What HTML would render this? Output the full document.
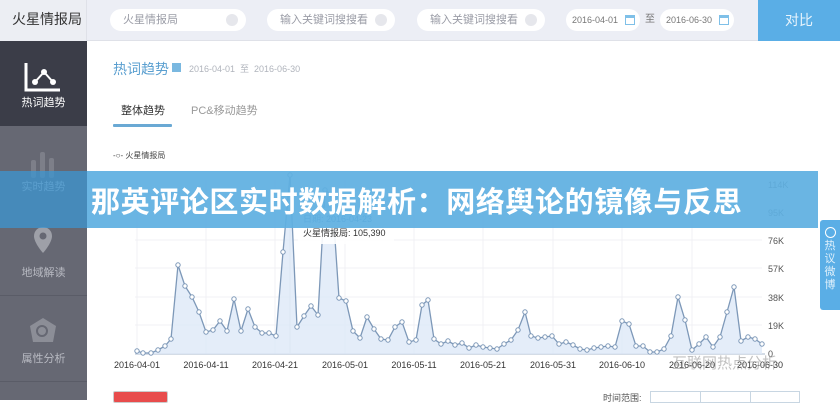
<!DOCTYPE html>
<html><head><meta charset="utf-8"><style>
*{margin:0;padding:0;box-sizing:border-box}
body{width:840px;height:400px;overflow:hidden;background:#fff;font-family:"Liberation Sans","Noto Sans CJK SC",sans-serif;position:relative}
.abs{position:absolute}
.topbar{left:0;top:0;width:840px;height:41px;background:#eceef5;border-bottom:1px solid #dfe1e8}
.inp{top:9px;height:22px;border-radius:11px;background:#fff;font-size:11px;color:#9a9ca6;line-height:22px;padding-left:13px}
.inp i{position:absolute;right:8px;top:5px;width:12px;height:12px;border-radius:6px;background:#e6e7ec}
.side{left:0;top:41px;width:87px;height:359px;background:#666873}
.sitem{width:87px;text-align:center;color:#b8bac2;font-size:11px}
</style></head><body>
<div class="abs topbar"></div>
<div class="abs" style="left:0;top:0;width:87px;height:41px;background:#eceef3;border-right:1px solid #dfe1e8;font-size:14px;color:#333;line-height:38px;padding-left:12px">火星情报局</div>
<div class="abs inp" style="left:110px;width:136px">火星情报局<i></i></div>
<div class="abs inp" style="left:267px;width:128px">输入关键词搜搜看<i></i></div>
<div class="abs inp" style="left:417px;width:128px">输入关键词搜搜看<i></i></div>
<div class="abs inp" style="left:566px;width:74px;font-size:9px;color:#777;padding-left:6px">2016-04-01<span style="position:absolute;right:5px;top:6px;width:10px;height:10px;border:1px solid #7fc0e8;border-top-width:3px"></span></div>
<div class="abs" style="left:645px;top:9px;font-size:10px;color:#777;line-height:22px">至</div>
<div class="abs inp" style="left:660px;width:74px;font-size:9px;color:#777;padding-left:6px">2016-06-30<span style="position:absolute;right:5px;top:6px;width:10px;height:10px;border:1px solid #7fc0e8;border-top-width:3px"></span></div>
<div class="abs" style="left:758px;top:0;width:82px;height:41px;background:#5aaee6;color:#e8f4fc;font-size:14px;text-align:center;line-height:40px">对比</div>

<div class="abs side"></div>
<div class="abs" style="left:0;top:41px;width:87px;height:85px;background:#3b3d48"></div>
<svg class="abs" style="left:24px;top:62px" width="40" height="30"><path d="M2 1 V28 H36" stroke="#fff" stroke-width="3" fill="none"/><path d="M11 20 L20 10 L29 20" stroke="#fff" stroke-width="2" fill="none"/><circle cx="11" cy="20" r="3" fill="#fff"/><circle cx="20" cy="10" r="3" fill="#fff"/><circle cx="29" cy="20" r="3" fill="#fff"/></svg>
<div class="abs sitem" style="top:94px;color:#fff;font-size:11px">热词趋势</div>
<div class="abs sitem" style="top:178px">实时趋势</div>
<div class="abs sitem" style="top:264px">地域解读</div>
<div class="abs" style="left:0;top:295px;width:87px;height:1px;background:#5a5c67"></div>
<div class="abs sitem" style="top:350px">属性分析</div>
<div class="abs" style="left:0;top:381px;width:87px;height:1px;background:#5a5c67"></div>
<svg class="abs" style="left:30px;top:225px" width="26" height="34"><path d="M13 2 a9 9 0 0 1 9 9 c0 7-9 17-9 17 s-9-10-9-17 a9 9 0 0 1 9-9z" fill="#9ea0a8"/><circle cx="13" cy="11" r="3.5" fill="#666873"/></svg>
<svg class="abs" style="left:27px;top:316px" width="32" height="30"><path d="M16 2 L29 10 L26 26 L6 26 L3 10Z" fill="#8c8e97"/><circle cx="15" cy="15" r="5" stroke="#666873" stroke-width="2" fill="none"/></svg>
<svg class="abs" style="left:28px;top:150px" width="30" height="30"><rect x="3" y="10" width="5" height="18" rx="2" fill="#7d7f89"/><rect x="12" y="2" width="5" height="26" rx="2" fill="#7d7f89"/><rect x="21" y="8" width="5" height="20" rx="2" fill="#7d7f89"/></svg>

<div class="abs" style="left:113px;top:59px;font-size:14px;color:#5a9fd0">热词趋势</div>
<div class="abs" style="left:172px;top:63px;width:9px;height:9px;background:#7ab8e0"></div>
<div class="abs" style="left:189px;top:62px;font-size:9px;color:#b0b4bc">2016-04-01 &nbsp;至 &nbsp;2016-06-30</div>
<div class="abs" style="left:121px;top:102px;font-size:11px;color:#333">整体趋势</div>
<div class="abs" style="left:191px;top:102px;font-size:11px;color:#999">PC&amp;移动趋势</div>
<div class="abs" style="left:113px;top:124px;width:59px;height:3px;background:#6aa9d4;border-radius:1px"></div>
<div class="abs" style="left:113px;top:150px;font-size:8px;color:#444">-○- 火星情报局</div>

<svg class="abs" style="left:0;top:0" width="840" height="400">
<defs><marker id="m" markerWidth="6" markerHeight="6" refX="3" refY="3" markerUnits="userSpaceOnUse"><circle cx="3" cy="3" r="2.2" fill="#fff" stroke="#7d98b8" stroke-width="1"/></marker></defs>
<g stroke="#f0f1f4" stroke-width="1">
<line x1="137" y1="180" x2="137" y2="354"/><line x1="206" y1="180" x2="206" y2="354"/><line x1="275" y1="180" x2="275" y2="354"/><line x1="345" y1="180" x2="345" y2="354"/><line x1="414" y1="180" x2="414" y2="354"/><line x1="483" y1="180" x2="483" y2="354"/><line x1="553" y1="180" x2="553" y2="354"/><line x1="622" y1="180" x2="622" y2="354"/><line x1="692" y1="180" x2="692" y2="354"/>
<line x1="135" y1="240" x2="762" y2="240"/><line x1="135" y1="268" x2="762" y2="268"/><line x1="135" y1="297" x2="762" y2="297"/><line x1="135" y1="325" x2="762" y2="325"/>
</g>
<line x1="135" y1="354" x2="765" y2="354" stroke="#aab8cc"/>
<line x1="290" y1="190" x2="290" y2="354" stroke="#d7dbe3"/>
<polygon fill="#dde9f8" opacity="0.8" points="137,351 143,353 151,353 158,350 165,346 171,339 178,265 185,286 192,297 199,312 206,332 213,330 220,321 227,331 234,299 241,331 248,309 255,327 262,333 269,333 276,336 283,252 290,175 297,327 304,316 311,306 318,315 325,190 332,195 339,298 346,301 353,331 360,338 367,317 374,329 381,339 388,340 395,327 402,322 409,342 416,340 422,305 428,300 434,339 441,344 448,341 455,345 462,343 469,348 476,345 483,347 490,348 497,349 504,344 511,340 518,330 525,312 531,336 538,338 545,337 552,336 559,344 566,342 573,345 580,349 587,350 594,348 601,347 608,346 615,347 622,321 629,324 636,346 643,346 650,352 657,352 664,349 671,336 678,297 685,320 692,350 699,344 706,337 713,347 720,337 727,312 734,287 741,341 748,337 755,339 762,344 762,354 137,354"/>
<polyline fill="none" stroke="#7d98b8" stroke-width="1.3" marker-start="url(#m)" marker-mid="url(#m)" marker-end="url(#m)" points="137,351 143,353 151,353 158,350 165,346 171,339 178,265 185,286 192,297 199,312 206,332 213,330 220,321 227,331 234,299 241,331 248,309 255,327 262,333 269,333 276,336 283,252 290,175 297,327 304,316 311,306 318,315 325,190 332,195 339,298 346,301 353,331 360,338 367,317 374,329 381,339 388,340 395,327 402,322 409,342 416,340 422,305 428,300 434,339 441,344 448,341 455,345 462,343 469,348 476,345 483,347 490,348 497,349 504,344 511,340 518,330 525,312 531,336 538,338 545,337 552,336 559,344 566,342 573,345 580,349 587,350 594,348 601,347 608,346 615,347 622,321 629,324 636,346 643,346 650,352 657,352 664,349 671,336 678,297 685,320 692,350 699,344 706,337 713,347 720,337 727,312 734,287 741,341 748,337 755,339 762,344"/>
<g font-size="9" fill="#333" font-family="Liberation Sans,sans-serif" text-anchor="middle">
<text x="137" y="368">2016-04-01</text><text x="206" y="368">2016-04-11</text><text x="275" y="368">2016-04-21</text><text x="345" y="368">2016-05-01</text><text x="414" y="368">2016-05-11</text><text x="483" y="368">2016-05-21</text><text x="553" y="368">2016-05-31</text><text x="622" y="368">2016-06-10</text><text x="692" y="368">2016-06-20</text><text x="760" y="368">2016-06-30</text>
</g>
<g font-size="9" fill="#555" font-family="Liberation Sans,sans-serif">
<text x="768" y="188">114K</text><text x="768" y="216">95K</text><text x="768" y="244">76K</text><text x="768" y="272">57K</text><text x="768" y="301">38K</text><text x="768" y="329">19K</text><text x="768" y="357">0</text>
</g>
<text x="672" y="368" font-size="15" fill="#999" opacity="0.6" font-family="Liberation Sans,Noto Sans CJK SC,sans-serif">互联网热点分析</text>
</svg>
<div class="abs" style="left:298px;top:208px;width:96px;height:36px;background:rgba(255,255,255,0.9);font-size:9px;line-height:14px;padding:4px 5px;color:#333"><span style="color:#4a7fb0">日期: 2016-04-23</span><br>火星情报局: 105,390</div>

<div class="abs" style="left:820px;top:220px;width:20px;height:90px;background:#5aaee6;border-radius:3px 0 0 3px;color:#dff0fb;font-size:11px;text-align:center;padding-top:20px;line-height:13px">热<br>议<br>微<br>博</div>
<div class="abs" style="left:825px;top:227px;width:11px;height:11px;border:1.5px solid #fff;border-radius:50%"></div>

<div class="abs" style="left:113px;top:391px;width:55px;height:12px;background:#e84c4c;border:1px solid #ccc;border-radius:2px"></div>
<div class="abs" style="left:603px;top:391px;font-size:9px;color:#555">时间范围:</div>
<div class="abs" style="left:650px;top:391px;width:150px;height:12px;border:1px solid #c8d6e2"></div>
<div class="abs" style="left:700px;top:391px;width:1px;height:12px;background:#c8d6e2"></div>
<div class="abs" style="left:750px;top:391px;width:1px;height:12px;background:#c8d6e2"></div>

<div class="abs" style="left:0;top:171px;width:87px;height:57px;background:rgba(60,150,210,0.75)"></div>
<div class="abs" style="left:87px;top:171px;width:731px;height:57px;background:rgba(95,175,225,0.93)"></div>
<div class="abs" style="left:91px;top:180px;font-size:29px;font-weight:bold;color:#fff;letter-spacing:0.6px;font-family:'Noto Sans CJK SC','WenQuanYi Zen Hei',sans-serif;line-height:40px;white-space:nowrap">那英评论区实时数据解析：网络舆论的镜像与反思</div>
</body></html>
